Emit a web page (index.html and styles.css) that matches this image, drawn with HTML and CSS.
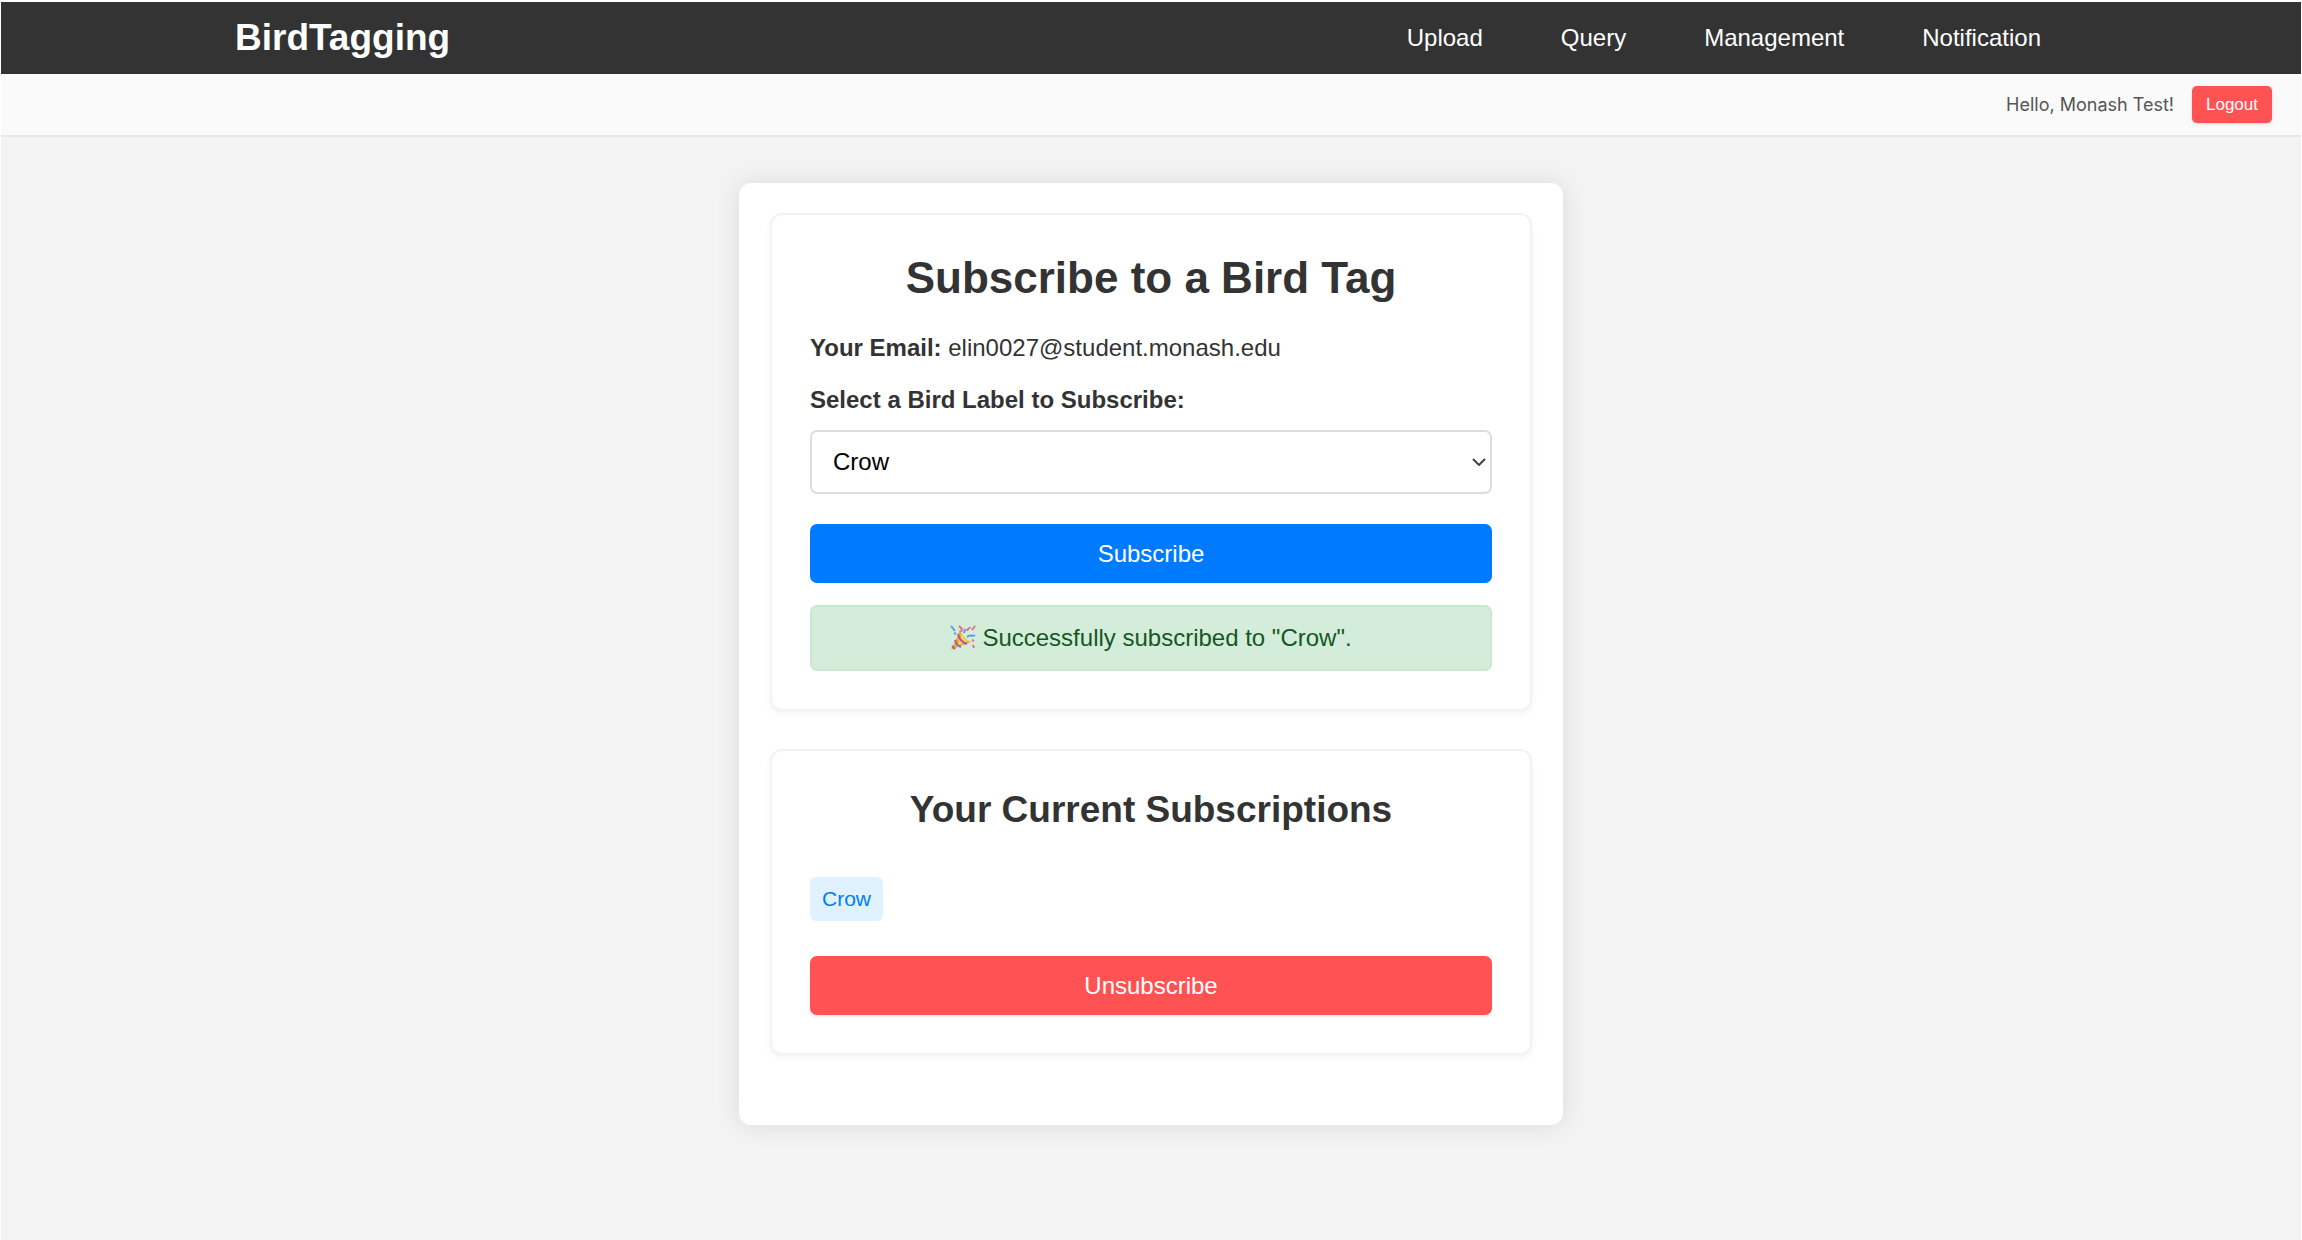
FILE: index.html
```html
<!DOCTYPE html>
<html lang="en">
<head>
<meta charset="utf-8">
<meta name="viewport" content="width=device-width, initial-scale=1">
<title>BirdTagging</title>
<link rel="stylesheet" href="styles.css">
</head>
<body>
<header class="topbar">
  <a class="brand" href="#">BirdTagging</a>
  <nav class="nav" aria-label="Main">
    <a href="#">Upload</a>
    <a href="#">Query</a>
    <a href="#">Management</a>
    <a href="#">Notification</a>
  </nav>
</header>
<div class="userbar">
  <span>Hello, Monash Test!</span>
  <button class="logout" type="button">Logout</button>
</div>
<main class="panel">
  <section class="card">
    <h1>Subscribe to a Bird Tag</h1>
    <p class="email"><strong>Your Email:</strong> elin0027@student.monash.edu</p>
    <form class="form">
      <label for="bird">Select a Bird Label to Subscribe:</label>
      <div class="select-wrap">
        <select id="bird"><option>Crow</option></select>
        <svg class="chevron" viewBox="0 0 14 8" aria-hidden="true"><path d="M1 1l6 6 6-6"/></svg>
      </div>
      <button class="button subscribe" type="button">Subscribe</button>
    </form>
    <p class="notice" role="status">
      <svg class="party" viewBox="0 0 26 26" aria-hidden="true">
        <path fill="#f0ac2c" d="M10 4C8 11 4 18 1 25c7-3 13-6 20-8-5-2-10-7-11-13z"/>
        <path fill="#ffd54a" d="M12 9 7 21l11-5c-3-2-5-4-6-7z"/>
        <path fill="none" stroke="#a45bb8" stroke-width="2" d="M8 9c1 5 5 9 9 10M5 15c1 4 3 6 6 7M2 21l3 3"/>
        <path fill="none" stroke="#5b9be6" stroke-width="2" d="M1 1l4 5M4 8l2 1M17 12c3-3 5 0 8-2M14 8l1-4"/>
        <path fill="none" stroke="#e2708a" stroke-width="2" d="M9 1l3 3-1 3M17 6c0-3 3-2 3-4M22 5l3-4M22 15l2 1M23 20l1 3"/>
      </svg>
      <span>Successfully subscribed to "Crow".</span>
    </p>
  </section>
  <section class="card">
    <h2>Your Current Subscriptions</h2>
    <ul class="tags"><li>Crow</li></ul>
    <button class="button unsubscribe" type="button">Unsubscribe</button>
  </section>
</main>
</body>
</html>
```
FILE: styles.css
```css
* { box-sizing: border-box; }

body {
  margin: 0;
  min-height: 100vh;
  border: 1px solid #fff;
  border-top-width: 2px;
  border-bottom: 0;
  background: #f3f3f3;
  color: #333;
  font: 24px/36px "Liberation Sans", Arial, sans-serif;
}

h1, h2, p, ul { margin: 0; padding: 0; }
a { color: #fff; text-decoration: none; }
button, select { font: inherit; }

.topbar {
  display: flex;
  align-items: center;
  justify-content: space-between;
  height: 72px;
  padding: 0 260px 0 234px;
  background: #333;
}
.brand { font-size: 37px; font-weight: bold; }
.nav { display: flex; gap: 78px; }

.userbar {
  display: flex;
  align-items: center;
  justify-content: flex-end;
  gap: 18px;
  height: 63px;
  padding: 0 29px;
  border-bottom: 2px solid #e8e8e8;
  background: #fafafa;
  color: #555;
  font-family: Inter, "Liberation Sans", sans-serif;
  font-size: 18px;
}
.logout {
  height: 37px;
  padding: 0 14px;
  border: 0;
  border-radius: 5px;
  background: #ff5252;
  box-shadow: 0 1px 3px rgba(0, 0, 0, .15);
  color: #fff;
  font-family: "Liberation Sans", Arial, sans-serif;
  font-size: 17px;
}

.panel {
  display: flex;
  flex-direction: column;
  gap: 38px;
  width: calc(100% - 48px);
  max-width: 824px;
  margin: 46px auto;
  padding: 30px 31px 70px;
  border-radius: 12px;
  background: #fff;
  box-shadow: 0 0 24px rgba(0, 0, 0, .1);
}
.card {
  display: flex;
  flex-direction: column;
  padding: 38px;
  border: 2px solid #f2f3f6;
  border-radius: 12px;
  background: #fff;
  box-shadow: 0 3px 6px rgba(0, 0, 0, .05);
}
h1, h2 { text-align: center; }
h1 { font-size: 44px; line-height: 50px; }
h2 { font-size: 37px; line-height: 42px; }
.email { margin-top: 27px; }
.form { display: flex; flex-direction: column; }
.form label { margin-top: 16px; font-weight: bold; }
.select-wrap { position: relative; margin: 12px 0 30px; }
.select-wrap select {
  display: block;
  width: 100%;
  height: 64px;
  padding: 0 40px 0 21px;
  border: 2px solid #ddd;
  border-radius: 7px;
  background: #fff;
  color: #000;
  appearance: none;
}
.chevron {
  position: absolute;
  top: 28px;
  right: 6px;
  width: 14px;
  height: 8px;
  fill: none;
  stroke: #444;
  stroke-width: 2;
  pointer-events: none;
}
.button {
  height: 59px;
  border: 0;
  border-radius: 7px;
  color: #fff;
}
.subscribe { background: #007bff; }
.notice {
  display: flex;
  align-items: center;
  justify-content: center;
  gap: 6px;
  height: 66px;
  margin-top: 22px;
  border: 2px solid #c8e8cf;
  border-radius: 7px;
  background: #d4edda;
  color: #155724;
}
.party { width: 26px; height: 26px; }
.tags {
  display: flex;
  flex-wrap: wrap;
  gap: 12px;
  margin: 46px 0 35px;
  list-style: none;
}
.tags li {
  padding: 4px 12px;
  border-radius: 6px;
  background: #e0f2ff;
  color: #007bff;
  font-size: 21px;
}
.unsubscribe { background: #ff5252; box-shadow: 0 2px 3px rgba(0, 0, 0, .08); }
```
